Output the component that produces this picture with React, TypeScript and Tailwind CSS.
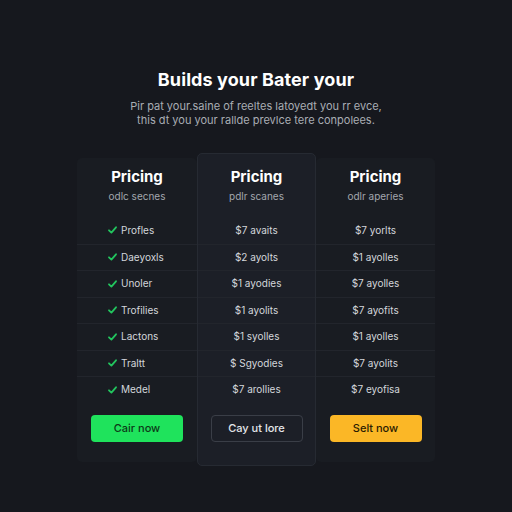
import React from 'react';

type Plan = {
  sub: string;
  rows: string[];
  cta: string;
  checks?: boolean;
  featured?: boolean;
  btn: string;
};

const plans: Plan[] = [
  {
    sub: 'odlc secnes',
    rows: ['Profles', 'Daeyoxls', 'Unoler', 'Trofilies', 'Lactons', 'Traltt', 'Medel'],
    cta: 'Cair now',
    checks: true,
    btn: 'bg-[#1fe35c] text-[#0c3a18] hover:bg-[#1ad052]',
  },
  {
    sub: 'pdlr scanes',
    rows: ['$7 avaits', '$2 ayolts', '$1 ayodies', '$1 ayolits', '$1 syolles', '$ Sgyodies', '$7 arollies'],
    cta: 'Cay ut lore',
    featured: true,
    btn: 'border border-[#3a3e47] text-[#e4e6ea] bg-transparent',
  },
  {
    sub: 'odlr aperies',
    rows: ['$7 yorlts', '$1 ayolles', '$7 ayolles', '$7 ayofits', '$1 ayolles', '$7 ayolits', '$7 eyofisa'],
    cta: 'Selt now',
    btn: 'bg-[#fbb726] text-[#2b1c02]',
  },
];

const Check = () => (
  <svg width="9" height="8" viewBox="0 0 9 8" className="mr-[4px] shrink-0">
    <path d="M1 4.3 L3.4 6.6 L8 1.3" fill="none" stroke="#22c55e" strokeWidth="1.8" strokeLinecap="round" strokeLinejoin="round" />
  </svg>
);

const PlanCard: React.FC<{ plan: Plan; width: string }> = ({ plan, width }) => {
  return (
    <div
      className={
        plan.featured
          ? `${width} h-[313px] flex flex-col items-center pt-[13px] rounded-[5px] bg-[#1c1f27] border border-[#262a32]`
          : `${width} h-[304px] mt-[5px] flex flex-col items-center pt-[9px] rounded-[5px] bg-[#191c22]`
      }
    >
      <h2 className="text-[15px] leading-[20px] font-bold text-white">Pricing</h2>
      <p className="mt-[2px] text-[10px] leading-[14px] text-[#a3a7ae]">{plan.sub}</p>
      <div className="mt-[14px] w-full">
        {plan.rows.map((r, i) => (
          <div
            key={i}
            className={`h-[26.5px] flex items-center text-[10px] text-[#d3d6db] ${i > 0 ? 'border-t border-[#22252c]' : ''} ${plan.checks ? 'pl-[31px]' : 'justify-center'}`}
          >
            {plan.checks && <Check />}
            <span>{r}</span>
          </div>
        ))}
      </div>
      <button className={`mt-[12px] w-[92px] h-[27px] rounded-[4px] text-[11px] font-medium ${plan.btn}`}>
        {plan.cta}
      </button>
    </div>
  );
};

export default function App() {
  return (
    <div className="w-full h-[512px] bg-[#16181e] flex flex-col items-center" style={{ fontFamily: 'Inter, "Open Sans", sans-serif' }}>
      <h1 className="mt-[69px] text-[18px] leading-[22px] font-bold text-white tracking-[0.1px]">Builds your Bater your</h1>
      <p className="mt-[8px] text-[11px] leading-[14px] text-[#a9adb4] text-center">
        Pir pat your.saine of reeltes latoyedt you rr evce,
        <br />
        this dt you your rallde prevlce tere conpolees.
      </p>
      <div className="mt-[26px] flex items-start">
        <PlanCard plan={plans[0]} width="w-[120px]" />
        <PlanCard plan={plans[1]} width="w-[119px]" />
        <PlanCard plan={plans[2]} width="w-[119px]" />
      </div>
    </div>
  );
}
